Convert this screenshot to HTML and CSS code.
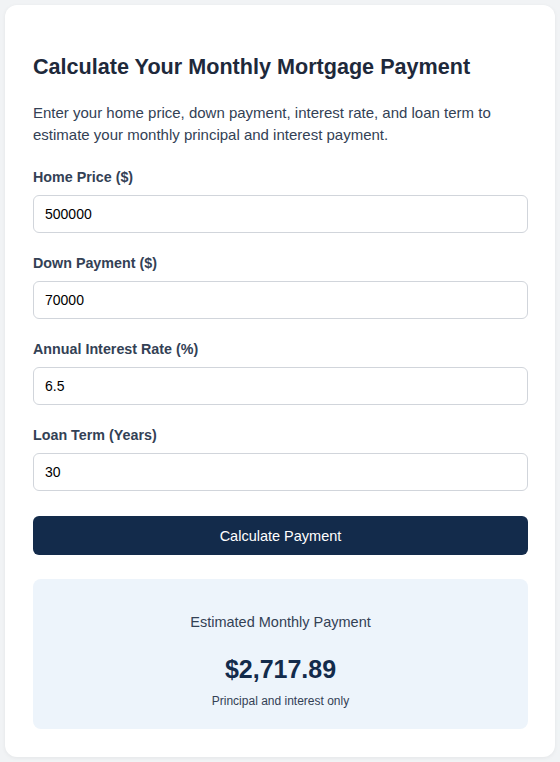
FILE: index.html
```html
<!DOCTYPE html>
<html lang="en">
<head>
    <meta charset="UTF-8">
    <meta name="viewport" content="width=device-width, initial-scale=1.0">
    <title>Mortgage Calculator</title>
    <link rel="stylesheet" href="styles.css">
</head>
<body>

<div class="card">
    <h1>Calculate Your Monthly Mortgage Payment</h1>
    <p class="intro">Enter your home price, down payment, interest rate, and loan term to estimate your monthly principal and interest payment.</p>

    <div class="field">
        <label for="price">Home Price ($)</label>
        <input type="number" id="price" value="500000">
    </div>
    <div class="field">
        <label for="down">Down Payment ($)</label>
        <input type="number" id="down" value="70000">
    </div>
    <div class="field">
        <label for="rate">Annual Interest Rate (%)</label>
        <input type="number" id="rate" value="6.5" step="0.1">
    </div>
    <div class="field">
        <label for="term">Loan Term (Years)</label>
        <input type="number" id="term" value="30">
    </div>

    <button class="calc" onclick="calculate()">Calculate Payment</button>

    <div class="result">
        <div class="result-label">Estimated Monthly Payment</div>
        <div class="result-amount" id="amount">$2,717.89</div>
        <div class="result-note">Principal and interest only</div>
    </div>
</div>

<script>
    function calculate() {
        const price = parseFloat(document.getElementById('price').value) || 0;
        const down = parseFloat(document.getElementById('down').value) || 0;
        const rate = (parseFloat(document.getElementById('rate').value) || 0) / 100 / 12;
        const n = (parseFloat(document.getElementById('term').value) || 0) * 12;
        const loan = price - down;
        let payment = 0;
        if (n > 0) {
            payment = rate ? loan * rate / (1 - Math.pow(1 + rate, -n)) : loan / n;
        }
        document.getElementById('amount').textContent = '$' + payment.toLocaleString('en-US', { minimumFractionDigits: 2, maximumFractionDigits: 2 });
    }
</script>
</body>
</html>
```

FILE: styles.css
```css
body {
    font-family: "Liberation Sans", Arial, sans-serif;
    background-color: #f1f3f5;
    color: #1e293b;
    margin: 0;
    padding: 5px;
}
.card {
    background-color: #ffffff;
    border-radius: 12px;
    box-shadow: 0 1px 4px rgba(0, 0, 0, 0.06);
    padding: 28px 27px 28px 28px;
    width: 495px;
}
h1 {
    font-size: 21.6px;
    font-weight: bold;
    color: #1e293b;
    margin: 20px 0 0;
    line-height: 28px;
}
.intro {
    font-size: 15px;
    line-height: 22px;
    color: #334155;
    margin: 21px 0 21px;
}
.field {
    margin-bottom: 20px;
}
label {
    display: block;
    font-size: 14.3px;
    font-weight: bold;
    color: #334155;
    line-height: 20px;
    margin-bottom: 8px;
}
input[type="number"] {
    box-sizing: border-box;
    width: 100%;
    height: 38px;
    padding: 0 11px;
    border: 1px solid #d1d5db;
    border-radius: 6px;
    font-family: inherit;
    font-size: 14px;
    color: #000;
    -moz-appearance: textfield;
}
input::-webkit-outer-spin-button,
input::-webkit-inner-spin-button {
    -webkit-appearance: none;
    margin: 0;
}
.calc {
    display: block;
    width: 100%;
    height: 39px;
    margin-top: 25px;
    background-color: #132b4b;
    color: #ffffff;
    border: none;
    border-radius: 6px;
    font-family: inherit;
    font-size: 14.5px;
    cursor: pointer;
}
.calc:hover {
    background-color: #1c3a63;
}
.result {
    margin-top: 24px;
    background-color: #edf4fb;
    border-radius: 8px;
    height: 150px;
    box-sizing: border-box;
    padding-top: 34px;
    text-align: center;
}
.result-label {
    font-size: 14.5px;
    color: #334155;
    line-height: 18px;
}
.result-amount {
    font-size: 25px;
    font-weight: bold;
    color: #132b4b;
    line-height: 30px;
    margin-top: 23px;
}
.result-note {
    font-size: 12px;
    color: #334155;
    line-height: 16px;
    margin-top: 9px;
}
```
